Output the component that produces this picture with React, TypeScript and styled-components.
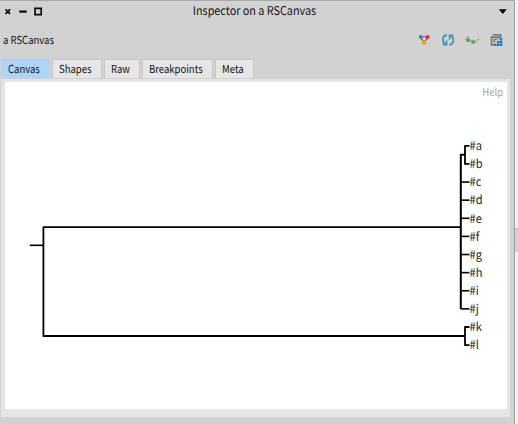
import React from "react";
import styled, { createGlobalStyle } from "styled-components";

const Global = createGlobalStyle`
  * { box-sizing: border-box; }
  body { margin: 0; background: #f2f2f2; overflow: hidden; }
`;

const font = `"Noto Sans CJK SC", "Noto Sans", sans-serif`;

const Desktop = styled.div`
  width: 518px;
  height: 424px;
  display: flex;
  font: 11px/16px ${font};
  text-rendering: geometricPrecision;
  color: #111;
  white-space: nowrap;
`;

const Window = styled.div`
  width: 515px;
  height: 424px;
  display: flex;
  flex-direction: column;
  background: #d2d2d2;
  border-top: 1px solid #a9a9a9;
  border-right: 1px solid #a0a0a0;
`;

const Gutter = styled.div`
  flex: 1;
  padding-top: 228px;
`;

const Thumb = styled.div`
  height: 24px;
  background: #d2d2d2;
  border-top: 1px solid #c0c0c0;
`;

const TitleBar = styled.header`
  height: 20px;
  display: grid;
  grid-template-columns: 44px 1fr 44px;
  align-items: center;
`;

const Title = styled.div`
  font-size: 12px;
  text-align: center;
  padding: 0 5px 1px 0;
`;

const Toolbar = styled.div`
  height: 38px;
  display: flex;
  align-items: center;
  justify-content: space-between;
  padding: 0 11px 0 3px;
`;

const Condensed = styled.span<{ $ratio?: number; $origin?: string }>`
  display: inline-block;
  transform: scaleX(${(p) => p.$ratio ?? 0.865});
  transform-origin: ${(p) => p.$origin ?? "left"} center;
`;

const Actions = styled.div`
  display: flex;
  gap: 10px;
`;

const Tabs = styled.nav`
  height: 19px;
  display: flex;
  gap: 2px;
  padding-left: 1px;
`;

const Tab = styled.div<{ $width: number; $active?: boolean }>`
  width: ${(p) => p.$width}px;
  padding-left: 6px;
  line-height: 18px;
  background: ${(p) => (p.$active ? "#aed4fa" : "#e6e6e6")};
  border: 1px solid ${(p) => (p.$active ? "#b3d2f0" : "#c6c6c6")};
  border-bottom: 0;
`;

const Panel = styled.main`
  width: 509px;
  height: 339px;
  margin-left: 1px;
  padding: 3px 3px 8px 4px;
  background: #e5e5e5;
  border-top: 1px solid #d0d0d0;
`;

const Canvas = styled.section`
  height: 327px;
  background: #fff;
  display: flex;
  flex-direction: column;
`;

const Help = styled.div`
  height: 20px;
  padding-right: 4px;
  text-align: right;
  line-height: 20px;
  color: #a1aaa0;
`;

const Tree = styled.svg`
  display: block;
  font: 12px ${font};
`;

const tabs = [
  { label: "Canvas", width: 49 },
  { label: "Shapes", width: 50 },
  { label: "Raw", width: 36 },
  { label: "Breakpoints", width: 71 },
  { label: "Meta", width: 39 },
];

const leaves = "abcdefghijkl".split("");
const leafY = (i: number) => 145.8 + i * 18.12;

function WindowControls() {
  return (
    <svg width="44" height="19" viewBox="0 1.7 44 19" fill="none" stroke="#0a0a0a">
      <path d="M5.5 9l4.6 4.6M10.1 9l-4.6 4.6" strokeWidth="1.7" />
      <path d="M19.3 11.3h7.4" strokeWidth="2.2" />
      <path d="M35 8h6.2v6.4H35z" strokeWidth="1.7" />
    </svg>
  );
}

function MenuArrow() {
  return (
    <svg width="44" height="19" viewBox="470 1.7 44 19">
      <path d="M498.8 9h8l-4 4.8z" fill="#000" />
    </svg>
  );
}

function Nodes() {
  return (
    <svg width="14" height="14" viewBox="417 33.6 14 14">
      <path d="M420.6 37.6h7l-3.5 5.6z" fill="#eee" stroke="#484848" strokeWidth="1.2" />
      <rect x="419" y="35.8" width="3.6" height="3.6" rx="1" fill="#2688c8" />
      <rect x="425.8" y="35.8" width="3.6" height="3.6" rx="1" fill="#e02e32" />
      <circle cx="424.1" cy="43" r="2.2" fill="#f7991c" />
    </svg>
  );
}

function Refresh() {
  return (
    <svg width="14" height="14" viewBox="441.5 34 14 14" fill="none" stroke="#4b91bd" strokeWidth="1.8">
      <path d="M447.4 36c-4.8.8-5.4 6.8-1.4 9.2M443.2 45.6h3.9v-4.2" />
      <path d="M449.8 46c4.8-.8 5.4-6.8 1.4-9.2M454 36.4h-3.9v4.2" />
    </svg>
  );
}

function Glasses() {
  return (
    <svg width="14" height="14" viewBox="465 34 14 14" fill="none">
      <path d="M466 40.8c0-2 1-2.8 2.8-2.8M471 42h1.4M475 43.4l3-3h1" stroke="#777b77" strokeWidth=".9" />
      <ellipse cx="468.3" cy="41.2" rx="1.9" ry="1.6" fill="#43b54b" stroke="#6b8f6b" strokeWidth=".6" />
      <ellipse cx="473.2" cy="43" rx="1.8" ry="1.5" fill="#43b54b" stroke="#6b8f6b" strokeWidth=".6" />
    </svg>
  );
}

function Sheets() {
  return (
    <svg width="14" height="14" viewBox="489.4 34.5 14 14" fill="none">
      <path d="M493 36.2h8V40M491.9 47v-8.4h7.2v2M491.9 46.4h2.6M494.6 44v-3h3" stroke="#777" strokeWidth="1.6" />
      <path
        d="M500.2 39.7h2.5v2.4h-2.5zM497.4 42.5h2.4v2.3h-2.4zM500.2 42.5h2.5v2.3h-2.5zM494.6 45.2h2.4v2.3h-2.4zM497.4 45.2h2.4v2.3h-2.4zM500.2 45.2h2.5v2.3h-2.5z"
        fill="#0b78cb"
      />
    </svg>
  );
}

function Dendrogram() {
  return (
    <Tree width="502" height="307" viewBox="5 102 502 307">
      <g fill="none" stroke="#000" strokeWidth="2" strokeLinejoin="round">
        <path d="M29.8 245.3H43.4" strokeWidth="1.6" />
        <path d="M461 227.2H43.4V336H465" strokeWidth="1.8" />
        <path d="M465 154.8h-4.2V308.9" />
        <path d="M469.5 145.8H465v18.1h4.5M469.5 327H465v18.1h4.5" strokeWidth="1.8" />
        {leaves.slice(2, 10).map((name, i) => (
          <path key={name} d={`M460.8 ${leafY(i + 2)}h8.7`} strokeWidth="1.6" />
        ))}
      </g>
      <g fill="#222">
        {leaves.map((name, i) => (
          <text key={name} transform={`translate(469.5 ${leafY(i) + 4.3}) scale(.92 1)`}>
            #{name}
          </text>
        ))}
      </g>
    </Tree>
  );
}

export default function App() {
  return (
    <>
      <Global />
      <Desktop>
        <Window>
          <TitleBar>
            <WindowControls />
            <Title>
              <Condensed $ratio={0.9} $origin="center">
                Inspector on a RSCanvas
              </Condensed>
            </Title>
            <MenuArrow />
          </TitleBar>
          <Toolbar>
            <Condensed>a RSCanvas</Condensed>
            <Actions>
              <Nodes />
              <Refresh />
              <Glasses />
              <Sheets />
            </Actions>
          </Toolbar>
          <Tabs>
            {tabs.map((tab, i) => (
              <Tab key={tab.label} $width={tab.width} $active={i === 0}>
                <Condensed>{tab.label}</Condensed>
              </Tab>
            ))}
          </Tabs>
          <Panel>
            <Canvas>
              <Help>
                <Condensed $origin="right">Help</Condensed>
              </Help>
              <Dendrogram />
            </Canvas>
          </Panel>
        </Window>
        <Gutter>
          <Thumb />
        </Gutter>
      </Desktop>
    </>
  );
}
